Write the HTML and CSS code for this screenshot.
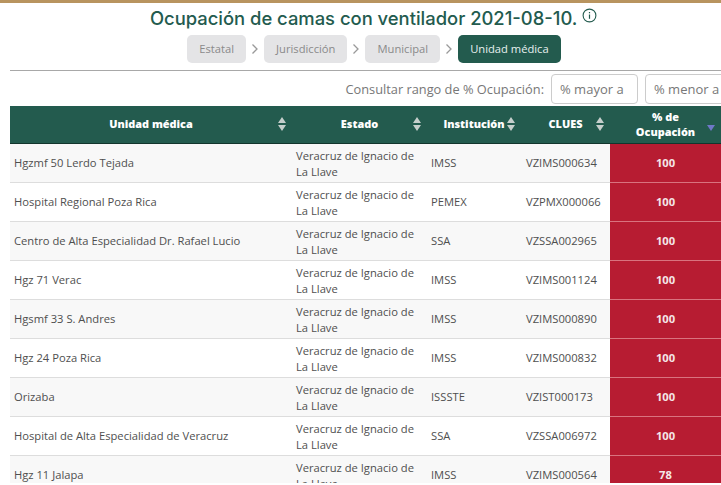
FILE: index.html
```html
<!DOCTYPE html>
<html lang="es">
<head>
<meta charset="utf-8">
<title>Ocupación de camas con ventilador</title>
<link rel="stylesheet" href="styles.css">
</head>
<body>
<div class="topbar"></div>
<h1 class="title">Ocupación de camas con ventilador 2021-08-10.
  <svg class="info" width="15" height="15" viewBox="0 0 15 15"><circle cx="7.5" cy="7.5" r="6.400" fill="none" stroke="#235b4e" stroke-width="1.100"/><rect x="6.900" y="6.500" width="1.200" height="4.300" fill="#235b4e"/><rect x="6.900" y="4" width="1.200" height="1.300" fill="#235b4e"/></svg>
</h1>
<nav class="crumbs">
  <span class="chip">Estatal</span>
  <svg class="sep" width="8" height="12" viewBox="0 0 8 12"><path d="M1.500 1.500 6 6l-4.500 4.500" fill="none" stroke="#999" stroke-width="1.300"/></svg>
  <span class="chip">Jurisdicción</span>
  <svg class="sep" width="8" height="12" viewBox="0 0 8 12"><path d="M1.500 1.500 6 6l-4.500 4.500" fill="none" stroke="#999" stroke-width="1.300"/></svg>
  <span class="chip">Municipal</span>
  <svg class="sep" width="8" height="12" viewBox="0 0 8 12"><path d="M1.500 1.500 6 6l-4.500 4.500" fill="none" stroke="#999" stroke-width="1.300"/></svg>
  <span class="chip active">Unidad médica</span>
</nav>
<div class="content">
  <div class="filter">
    <span class="filter-label">Consultar rango de % Ocupación:</span>
    <input class="range" placeholder="% mayor a">
    <input class="range" placeholder="% menor a">
  </div>
  <div class="table-clip">
  <table class="grid">
    <colgroup><col class="c1"><col class="c2"><col class="c3"><col class="c4"><col class="c5"></colgroup>
    <thead>
      <tr>
        <th>Unidad médica<span class="sort"></span></th>
        <th>Estado<span class="sort"></span></th>
        <th>Institución<span class="sort"></span></th>
        <th>CLUES<span class="sort"></span></th>
        <th class="th-pct">% de<br>Ocupación<span class="sort desc"></span></th>
      </tr>
    </thead>
    <tbody>
      <tr><td>Hgzmf 50 Lerdo Tejada</td><td>Veracruz de Ignacio de La Llave</td><td>IMSS</td><td>VZIMS000634</td><td class="pct">100</td></tr>
      <tr><td>Hospital Regional Poza Rica</td><td>Veracruz de Ignacio de La Llave</td><td>PEMEX</td><td>VZPMX000066</td><td class="pct">100</td></tr>
      <tr><td>Centro de Alta Especialidad Dr. Rafael Lucio</td><td>Veracruz de Ignacio de La Llave</td><td>SSA</td><td>VZSSA002965</td><td class="pct">100</td></tr>
      <tr><td>Hgz 71 Verac</td><td>Veracruz de Ignacio de La Llave</td><td>IMSS</td><td>VZIMS001124</td><td class="pct">100</td></tr>
      <tr><td>Hgsmf 33 S. Andres</td><td>Veracruz de Ignacio de La Llave</td><td>IMSS</td><td>VZIMS000890</td><td class="pct">100</td></tr>
      <tr><td>Hgz 24 Poza Rica</td><td>Veracruz de Ignacio de La Llave</td><td>IMSS</td><td>VZIMS000832</td><td class="pct">100</td></tr>
      <tr><td>Orizaba</td><td>Veracruz de Ignacio de La Llave</td><td>ISSSTE</td><td>VZIST000173</td><td class="pct">100</td></tr>
      <tr><td>Hospital de Alta Especialidad de Veracruz</td><td>Veracruz de Ignacio de La Llave</td><td>SSA</td><td>VZSSA006972</td><td class="pct">100</td></tr>
      <tr><td>Hgz 11 Jalapa</td><td>Veracruz de Ignacio de La Llave</td><td>IMSS</td><td>VZIMS000564</td><td class="pct">78</td></tr>
    </tbody>
  </table>
  </div>
</div>
</body>
</html>
```
FILE: styles.css
```css
html, body { margin: 0; padding: 0; height: 485px; overflow: hidden; background: #fff; }
body { font-family: "Open Sans", sans-serif; color: #4f4f4f; }
.topbar { height: 3px; background: #b8945f; }
.title {
  margin: 3px 0 0; height: 25px; line-height: 25px; text-align: center; padding-left: 26px;
  font-family: Inter, sans-serif; font-weight: 500; font-size: 18.400px; color: #235b4e;
  white-space: nowrap;
}
.info { vertical-align: 2px; }
.crumbs { display: flex; justify-content: center; align-items: center; gap: 5px; margin-top: 4px; height: 28px; padding-left: 27px; }
.chip {
  height: 28px; line-height: 28px; padding: 0 12px; border-radius: 5px;
  background: #e4e4e6; color: #8a8a8a; font-size: 11.200px;
}
.chip.active { background: #235b4e; color: #e8f0ee; }
.sep { flex: none; }
.content { margin: 7px 0 0 10px; border-top: 1px solid #a8a8a8; }
.filter { display: flex; justify-content: flex-end; align-items: center; gap: 7px; height: 35px; margin-right: -11px; }
.filter-label { font-size: 12.800px; color: #777; }
.range {
  box-sizing: border-box; width: 87px; height: 30px; padding: 0 8px; flex: none;
  border: 1px solid #ccc; border-radius: 4px; font: 13px "Open Sans", sans-serif; background: #fff;
}
.range::placeholder { color: #777; opacity: 1; }
.table-clip { height: 377px; overflow: hidden; }
.grid { width: 711px; table-layout: fixed; border-collapse: collapse; font-size: 11.200px; }
.c1 { width: 282px; } .c2 { width: 135px; } .c3 { width: 94px; } .c4 { width: 89px; } .c5 { width: 111px; }
.grid thead th {
  position: relative; height: 37px; padding: 0 4px 2px; box-sizing: border-box;
  background: #235b4e; color: #fff; border-bottom: 1px solid #12352d;
  font-weight: 800; font-size: 10.900px; line-height: 15px; text-align: center;
}
.grid thead th.th-pct { padding-bottom: 0; }
.sort { position: absolute; right: 5px; top: 11px; width: 9px; height: 14px; }
.sort::before, .sort::after { content: ""; position: absolute; left: 0; border-left: 4.500px solid transparent; border-right: 4.500px solid transparent; }
.sort::before { top: 0; border-bottom: 6.500px solid #c5cfcc; }
.sort::after { bottom: 0; border-top: 6.500px solid #c5cfcc; }
.sort.desc::before { border-bottom-color: transparent; }
.sort.desc::after { border-top-color: #6f78c8; }
.grid tbody td { height: 39px; box-sizing: border-box; padding: 1px 4px 0; border-bottom: 1px solid #ddd; line-height: 16px; color: #4f4f4f; vertical-align: middle; }
.grid tbody td:nth-child(2) { padding-top: 3px; }
.grid tbody td:nth-child(4) { padding-left: 5px; }
.grid tbody tr:nth-child(odd) td { background: #f8f8f8; }
.grid tbody tr td.pct { background: #b71c32; color: #f4e6e8; font-weight: 700; text-align: center; border-bottom: 1px solid #d9737f; }
```
